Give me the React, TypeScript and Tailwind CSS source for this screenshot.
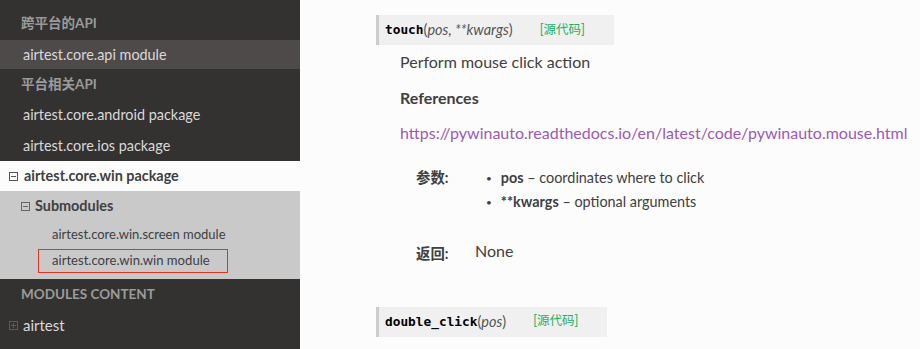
import React from "react";

const lato = { fontFamily: 'Lato, "Noto Sans CJK SC", "Liberation Sans", sans-serif' };

function BoxIcon({ plus, color }: { plus?: boolean; color: string }) {
  return (
    <svg width="9" height="9" viewBox="0 0 9 9" className="shrink-0">
      <rect x="0.5" y="0.5" width="8" height="8" fill="none" stroke={color} strokeWidth="1" />
      <line x1="2" y1="4.5" x2="7" y2="4.5" stroke={color} strokeWidth="1" />
      {plus && <line x1="4.5" y1="2" x2="4.5" y2="7" stroke={color} strokeWidth="1" />}
    </svg>
  );
}

function Signature({ name, args }: { name: string; args: React.ReactNode }) {
  return (
    <div className="flex items-center h-[30px] bg-[#f0f0f0] border-l-[3px] border-[#cccccc] pl-[6px] pr-[29px] w-fit">
      <span
        className="font-bold text-[#000] text-[12.8px]"
        style={{ fontFamily: '"DejaVu Sans Mono", monospace' }}
      >
        {name}
      </span>
      <span className="text-[#555] text-[14.5px]">(</span>
      <span className="italic text-[#555] text-[14.5px]">{args}</span>
      <span className="text-[#555] text-[14.5px]">)</span>
      <span className="ml-[27px] text-[12.5px] text-[#27ae60]">[源代码]</span>
    </div>
  );
}

export default function App() {
  return (
    <div className="flex w-[920px] h-[349px] overflow-hidden bg-[#fcfcfc]" style={lato}>
      <div className="w-[300px] shrink-0 bg-[#343131] text-[14.4px]">
        <div className="h-[40px] pt-[12px] pl-[21px] leading-[22px] text-[#9b9b9b] font-bold text-[13.5px]">跨平台的API</div>
        <div className="h-[29px] flex items-center pl-[23px] bg-[#4e4a4a] text-[#d9d9d9]">airtest.core.api module</div>
        <div className="h-[31px] flex items-center pl-[21px] text-[#9b9b9b] font-bold text-[13.5px]">平台相关API</div>
        <div className="h-[30px] flex items-center pl-[23px] text-[#d9d9d9]">airtest.core.android package</div>
        <div className="h-[31px] flex items-center pl-[23px] text-[#d9d9d9]">airtest.core.ios package</div>
        <div className="h-[30px] flex items-center pl-[9px] gap-[6px] bg-[#fcfcfc] text-[#404040] font-bold">
          <BoxIcon color="#555" />
          <span>airtest.core.win package</span>
        </div>
        <div className="bg-[#c9c9c9] text-[#404040]">
          <div className="h-[30px] flex items-center pl-[21px] gap-[5px] font-bold">
            <BoxIcon color="#666" />
            <span>Submodules</span>
          </div>
          <div className="h-[27px] flex items-center pl-[52px] text-[13px]">airtest.core.win.screen module</div>
          <div className="pt-[1px] pb-[6px] pl-[38px]">
            <div className="w-[190px] h-[24px] border border-[#e8321e] flex items-center pl-[13px] text-[13.1px]">
              airtest.core.win.win module
            </div>
          </div>
        </div>
        <div className="h-[31px] flex items-center pl-[21px] text-[#9b9b9b] font-bold text-[13.5px]">MODULES CONTENT</div>
        <div className="h-[30px] flex items-center pl-[9px] gap-[5px] text-[#d9d9d9]">
          <BoxIcon plus color="#5e5a5a" />
          <span className="text-[15px]">airtest</span>
        </div>
      </div>
      <div className="flex-1 pl-[76px] pt-[15px] text-[#404040]">
        <Signature name="touch" args="pos, **kwargs" />
        <div className="pl-[24px]">
          <div className="mt-[7px] h-[20px] leading-[20px] text-[16px]">Perform mouse click action</div>
          <div className="mt-[16px] h-[20px] leading-[20px] text-[16px] font-bold">References</div>
          <div className="mt-[15px] h-[20px] leading-[20px] text-[16px] text-[#9b59b6]">
            https://pywinauto.readthedocs.io/en/latest/code/pywinauto.mouse.html
          </div>
          <div className="mt-[23px] flex text-[14.4px]">
            <div className="w-[86px] pl-[16px] font-bold leading-[24px]">参数:</div>
            <ul className="leading-[24px]">
              <li className="flex items-center gap-[9px]">
                <span className="text-[10px]">•</span>
                <span><b>pos</b> – coordinates where to click</span>
              </li>
              <li className="flex items-center gap-[9px]">
                <span className="text-[10px]">•</span>
                <span><b>**kwargs</b> – optional arguments</span>
              </li>
            </ul>
          </div>
          <div className="mt-[25px] flex items-center">
            <div className="w-[75px] pl-[16px] font-bold text-[14.4px] mt-[4px]">返回:</div>
            <div className="text-[16px] -mt-[2px]">None</div>
          </div>
        </div>
        <div className="mt-[42px]">
          <Signature name="double_click" args="pos" />
        </div>
      </div>
    </div>
  );
}
